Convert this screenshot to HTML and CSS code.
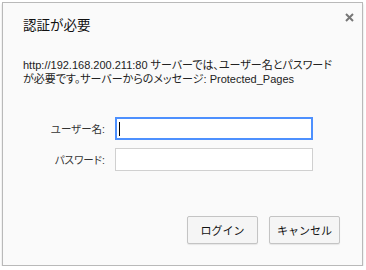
FILE: index.html
```html
<!DOCTYPE html>
<html lang="ja">
<head>
<meta charset="utf-8">
<link rel="stylesheet" href="styles.css">
</head>
<body>
<div class="dialog">
  <div class="header">
    <h1 class="title">認証が必要</h1>
    <span class="close">
      <svg width="9" height="9" viewBox="0 0 9 9"><path d="M1 1L8 8M8 1L1 8" stroke="#777" stroke-width="2"/></svg>
    </span>
  </div>
  <p class="message">http://192.168.200.211:80 サーバーでは、ユーザー名とパスワードが必要です。サーバーからのメッセージ: Protected_Pages</p>
  <div class="form">
    <label class="label">ユーザー名:</label>
    <div class="input focused"><span class="caret"></span></div>
    <label class="label">パスワード:</label>
    <div class="input"></div>
  </div>
  <div class="buttons">
    <button class="btn">ログイン</button>
    <button class="btn">キャンセル</button>
  </div>
</div>
</body>
</html>
```
FILE: styles.css
```css
html, body {
  margin: 0;
  padding: 0;
  background: #ffffff;
}
body {
  font-family: "Liberation Sans", "Noto Sans CJK JP", sans-serif;
  font-feature-settings: "palt";
  color: #222;
}
.dialog {
  margin: 2px 0 0 2px;
  width: 361px;
  height: 264px;
  box-sizing: border-box;
  background: #fafafa;
  border: 1px solid #b9b9b9;
  box-shadow: 0 2px 2px rgba(0,0,0,0.18);
  display: flex;
  flex-direction: column;
}
.header {
  display: flex;
  justify-content: space-between;
  align-items: flex-start;
  padding: 13px 8px 0 20px;
}
.title {
  margin: 0;
  font-size: 13.5px;
  font-weight: normal;
  line-height: 20px;
  color: #111;
  font-feature-settings: normal;
}
.close {
  display: flex;
  margin-top: -3px;
}
.message {
  margin: 22px 20px 0 20px;
  font-size: 11px;
  line-height: 14px;
  color: #222;
}
.form {
  display: grid;
  grid-template-columns: 82px 198px;
  column-gap: 10px;
  row-gap: 8px;
  margin: 31px 0 0 20px;
  align-items: center;
}
.label {
  font-size: 10.5px;
  text-align: right;
  color: #333;
}
.input {
  height: 23px;
  box-sizing: border-box;
  border: 1px solid #d0d0d0;
  background: #fff;
  display: flex;
  align-items: center;
  padding-left: 3px;
}
.input.focused {
  border: 1px solid #4d90fe;
  box-shadow: inset 0 0 0 1px #4d90fe;
}
.caret {
  width: 1px;
  height: 14px;
  background: #000;
}
.buttons {
  display: flex;
  justify-content: flex-end;
  gap: 11px;
  margin-top: auto;
  padding: 0 22px 21px 0;
}
.btn {
  width: 71px;
  height: 28px;
  font-family: inherit;
  font-size: 11px;
  color: #111;
  background: #f5f5f5;
  border: 1px solid #c4c4c4;
  border-radius: 2px;
  box-shadow: 0 1px 1px rgba(0,0,0,0.08);
  padding: 0;
}
```
